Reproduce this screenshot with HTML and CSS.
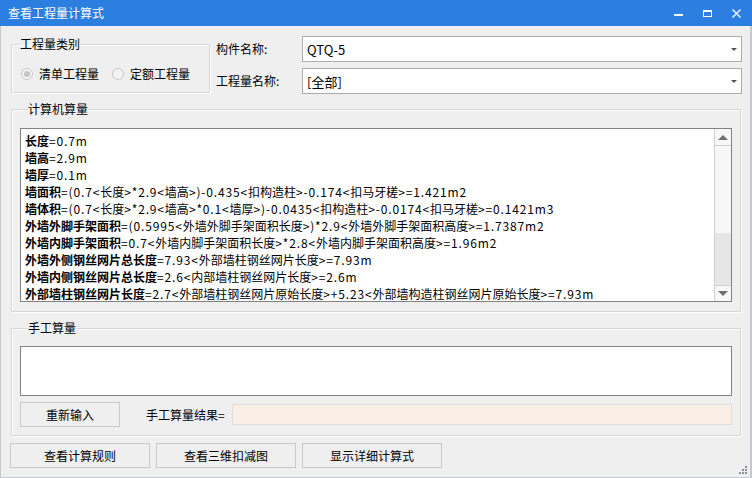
FILE: index.html
```html
<!DOCTYPE html>
<html lang="zh-CN">
<head>
<meta charset="utf-8">
<title>查看工程量计算式</title>
<link rel="stylesheet" href="styles.css">
</head>
<body>
<div class="window">
  <div class="titlebar">
    <span class="title">查看工程量计算式</span>
    <div class="controls">
      <svg class="ctl" width="29" height="26" viewBox="0 0 29 26"><rect x="9" y="14" width="9" height="2" fill="#fff"/></svg>
      <svg class="ctl" width="29" height="26" viewBox="0 0 29 26"><rect x="9.5" y="10.5" width="8" height="6" fill="none" stroke="#fff" stroke-width="1"/><rect x="9" y="10" width="9" height="2" fill="#fff"/></svg>
      <svg class="ctl" width="29" height="26" viewBox="0 0 29 26"><path d="M9.5 9.5 L17.5 17.5 M17.5 9.5 L9.5 17.5" stroke="#fff" stroke-width="1.3" fill="none"/></svg>
    </div>
  </div>
  <div class="content">
    <div class="top-row">
      <fieldset class="group type-group">
        <legend>工程量类别</legend>
        <div class="radios">
          <label class="radio"><span class="dot checked"></span>清单工程量</label>
          <label class="radio"><span class="dot"></span>定额工程量</label>
        </div>
      </fieldset>
      <div class="names">
        <div class="name-row">
          <span class="name-label">构件名称:</span>
          <div class="combo"><span>QTQ-5</span><span class="arrow"></span></div>
        </div>
        <div class="name-row">
          <span class="name-label">工程量名称:</span>
          <div class="combo"><span>[全部]</span><span class="arrow"></span></div>
        </div>
      </div>
    </div>

    <fieldset class="group calc-group">
      <legend>计算机算量</legend>
      <div class="textbox">
        <div class="lines">
          <div><b>长度</b>=0.7m</div>
          <div><b>墙高</b>=2.9m</div>
          <div><b>墙厚</b>=0.1m</div>
          <div><b>墙面积</b>=(0.7&lt;<span class="n">长度</span>&gt;*2.9&lt;<span class="n">墙高</span>&gt;)-0.435&lt;<span class="n">扣构造柱</span>&gt;-0.174&lt;<span class="n">扣马牙槎</span>&gt;=1.421m2</div>
          <div><b>墙体积</b>=(0.7&lt;<span class="n">长度</span>&gt;*2.9&lt;<span class="n">墙高</span>&gt;*0.1&lt;<span class="n">墙厚</span>&gt;)-0.0435&lt;<span class="n">扣构造柱</span>&gt;-0.0174&lt;<span class="n">扣马牙槎</span>&gt;=0.1421m3</div>
          <div><b>外墙外脚手架面积</b>=(0.5995&lt;<span class="n">外墙外脚手架面积长度</span>&gt;)*2.9&lt;<span class="n">外墙外脚手架面积高度</span>&gt;=1.7387m2</div>
          <div><b>外墙内脚手架面积</b>=0.7&lt;<span class="n">外墙内脚手架面积长度</span>&gt;*2.8&lt;<span class="n">外墙内脚手架面积高度</span>&gt;=1.96m2</div>
          <div><b>外墙外侧钢丝网片总长度</b>=7.93&lt;<span class="n">外部墙柱钢丝网片长度</span>&gt;=7.93m</div>
          <div><b>外墙内侧钢丝网片总长度</b>=2.6&lt;<span class="n">内部墙柱钢丝网片长度</span>&gt;=2.6m</div>
          <div><b>外部墙柱钢丝网片长度</b>=2.7&lt;<span class="n">外部墙柱钢丝网片原始长度</span>&gt;+5.23&lt;<span class="n">外部墙构造柱钢丝网片原始长度</span>&gt;=7.93m</div>
        </div>
        <div class="scrollbar">
          <div class="sb-btn sb-up"><span class="tri up"></span></div>
          <div class="sb-thumb"></div>
          <div class="sb-track"></div>
          <div class="sb-btn sb-down"><span class="tri down"></span></div>
        </div>
      </div>
    </fieldset>

    <fieldset class="group manual-group">
      <legend>手工算量</legend>
      <div class="textbox small"></div>
      <div class="manual-row">
        <div class="btn btn-reset">重新输入</div>
        <span class="result-label">手工算量结果=</span>
        <div class="result-field"></div>
      </div>
    </fieldset>

    <div class="bottom-buttons">
      <div class="btn btn-wide">查看计算规则</div>
      <div class="btn btn-wide">查看三维扣减图</div>
      <div class="btn btn-wide">显示详细计算式</div>
    </div>
  </div>
  <svg class="grip" width="9" height="9" viewBox="0 0 9 9">
    <rect x="6" y="0" width="2" height="2" fill="#8a8f99"/>
    <rect x="3" y="3" width="2" height="2" fill="#8a8f99"/>
    <rect x="6" y="3" width="2" height="2" fill="#8a8f99"/>
    <rect x="0" y="6" width="2" height="2" fill="#8a8f99"/>
    <rect x="3" y="6" width="2" height="2" fill="#8a8f99"/>
    <rect x="6" y="6" width="2" height="2" fill="#8a8f99"/>
  </svg>
</div>
</body>
</html>
```

FILE: styles.css
```css
* { box-sizing: border-box; }
html, body { margin: 0; padding: 0; }
body {
  width: 752px;
  height: 478px;
  overflow: hidden;
  background: #efefef;
  font-family: "Noto Sans CJK SC", "Microsoft YaHei", sans-serif;
  font-size: 12px;
  color: #000;
}
.window {
  position: relative;
  width: 752px;
  height: 478px;
  background: #efefef;
  border-left: 1px solid #c3c9d3;
  border-right: 2px solid #c3c9d3;
  border-bottom: 1px solid #c3c9d3;
  display: flex;
  flex-direction: column;
}
.titlebar {
  height: 26px;
  margin-left: -1px;
  margin-right: -2px;
  background: #2c7fe0;
  color: #fff;
  display: flex;
  align-items: center;
  justify-content: space-between;
  padding-left: 8px;
}
.title { font-size: 12px; line-height: 26px; }
.controls { display: flex; height: 26px; }
.ctl { display: block; }

.content {
  flex: 1;
  padding: 10px 8px 0 9px;
  display: flex;
  flex-direction: column;
}

.group {
  margin: 0;
  border: 1px solid #d6d6d6;
  box-shadow: inset 1px 1px 0 #fff, 1px 1px 0 #fff;
  padding: 0;
  min-width: 0;
}
.group legend {
  padding: 0;
  margin-left: 8px;
  line-height: 14px;
  font-size: 12px;
}

.top-row {
  display: flex;
  align-items: flex-start;
}
.type-group {
  margin-left: 1px;
  margin-top: 1px;
  width: 199px;
  height: 56px;
}
.radios {
  display: flex;
  padding: 16px 0 0 9px;
}
.radio {
  display: flex;
  align-items: center;
  line-height: 14px;
}
.radio + .radio { margin-left: 13px; }
.dot {
  width: 12px;
  height: 12px;
  border-radius: 50%;
  border: 1px solid #c8c8c8;
  background: #f4f4f4;
  margin-right: 6px;
  display: inline-flex;
  align-items: center;
  justify-content: center;
}
.dot.checked::after {
  content: "";
  width: 6px;
  height: 6px;
  border-radius: 50%;
  background: #c4c4c4;
}

.names {
  margin-left: 6px;
  display: flex;
  flex-direction: column;
  gap: 6px;
}
.name-row {
  display: flex;
  align-items: center;
}
.name-label {
  width: 86px;
  line-height: 14px;
}
.combo {
  width: 440px;
  height: 26px;
  background: #fff;
  border: 1px solid #ababab;
  display: flex;
  align-items: center;
  justify-content: space-between;
  padding: 0 4px 0 4px;
  font-size: 13px;
}
.arrow {
  width: 0;
  height: 0;
  border-left: 3px solid transparent;
  border-right: 3px solid transparent;
  border-top: 3px solid #555;
}

.calc-group {
  margin-left: 1px;
  margin-top: 8px;
  width: 730px;
  height: 210px;
  padding: 12px 8px 0 8px;
}
.textbox {
  border: 1px solid #828282;
  background: #fff;
  display: flex;
}
.calc-group .textbox {
  height: 174px;
  width: 712px;
}
.lines {
  flex: 1;
  padding: 3px 0 0 4px;
  line-height: 17px;
  white-space: nowrap;
  overflow: hidden;
  letter-spacing: 0.85px;
}
.lines b { font-weight: 700; letter-spacing: 0; }
.lines .n { letter-spacing: 0; }
.scrollbar {
  width: 17px;
  display: flex;
  flex-direction: column;
  background: #e6e6e6;
  border-left: 1px solid #d0d0d0;
}
.sb-btn {
  height: 17px;
  background: #f7f7f7;
  display: flex;
  align-items: center;
  justify-content: center;
}
.sb-up { border-bottom: 1px solid #d0d0d0; }
.sb-down { border-top: 1px solid #d0d0d0; height: 16px; }
.sb-thumb {
  height: 87px;
  background: #f7f7f7;
}
.sb-track { flex: 1; }
.tri {
  width: 0;
  height: 0;
  border-left: 5px solid transparent;
  border-right: 5px solid transparent;
}
.tri.up { border-bottom: 5px solid #707070; }
.tri.down { border-top: 5px solid #707070; }

.manual-group {
  margin-left: 1px;
  margin-top: 9px;
  width: 730px;
  height: 115px;
  padding: 11px 8px 0 8px;
}
.textbox.small {
  height: 50px;
  width: 712px;
}
.manual-row {
  display: flex;
  align-items: center;
  margin-top: 6px;
}
.btn {
  border: 1px solid #c9c9c9;
  background: #efefef;
  display: flex;
  align-items: center;
  justify-content: center;
  line-height: 14px;
}
.btn-reset {
  width: 100px;
  height: 25px;
}
.result-label {
  margin-left: 26px;
  width: 86px;
}
.result-field {
  width: 500px;
  height: 21px;
  background: #f9efe5;
  border: 1px solid #dedede;
}

.bottom-buttons {
  display: flex;
  gap: 6px;
  margin-top: 7px;
}
.btn-wide {
  width: 140px;
  height: 25px;
}

.grip {
  position: absolute;
  right: 2px;
  bottom: 2px;
}
```
